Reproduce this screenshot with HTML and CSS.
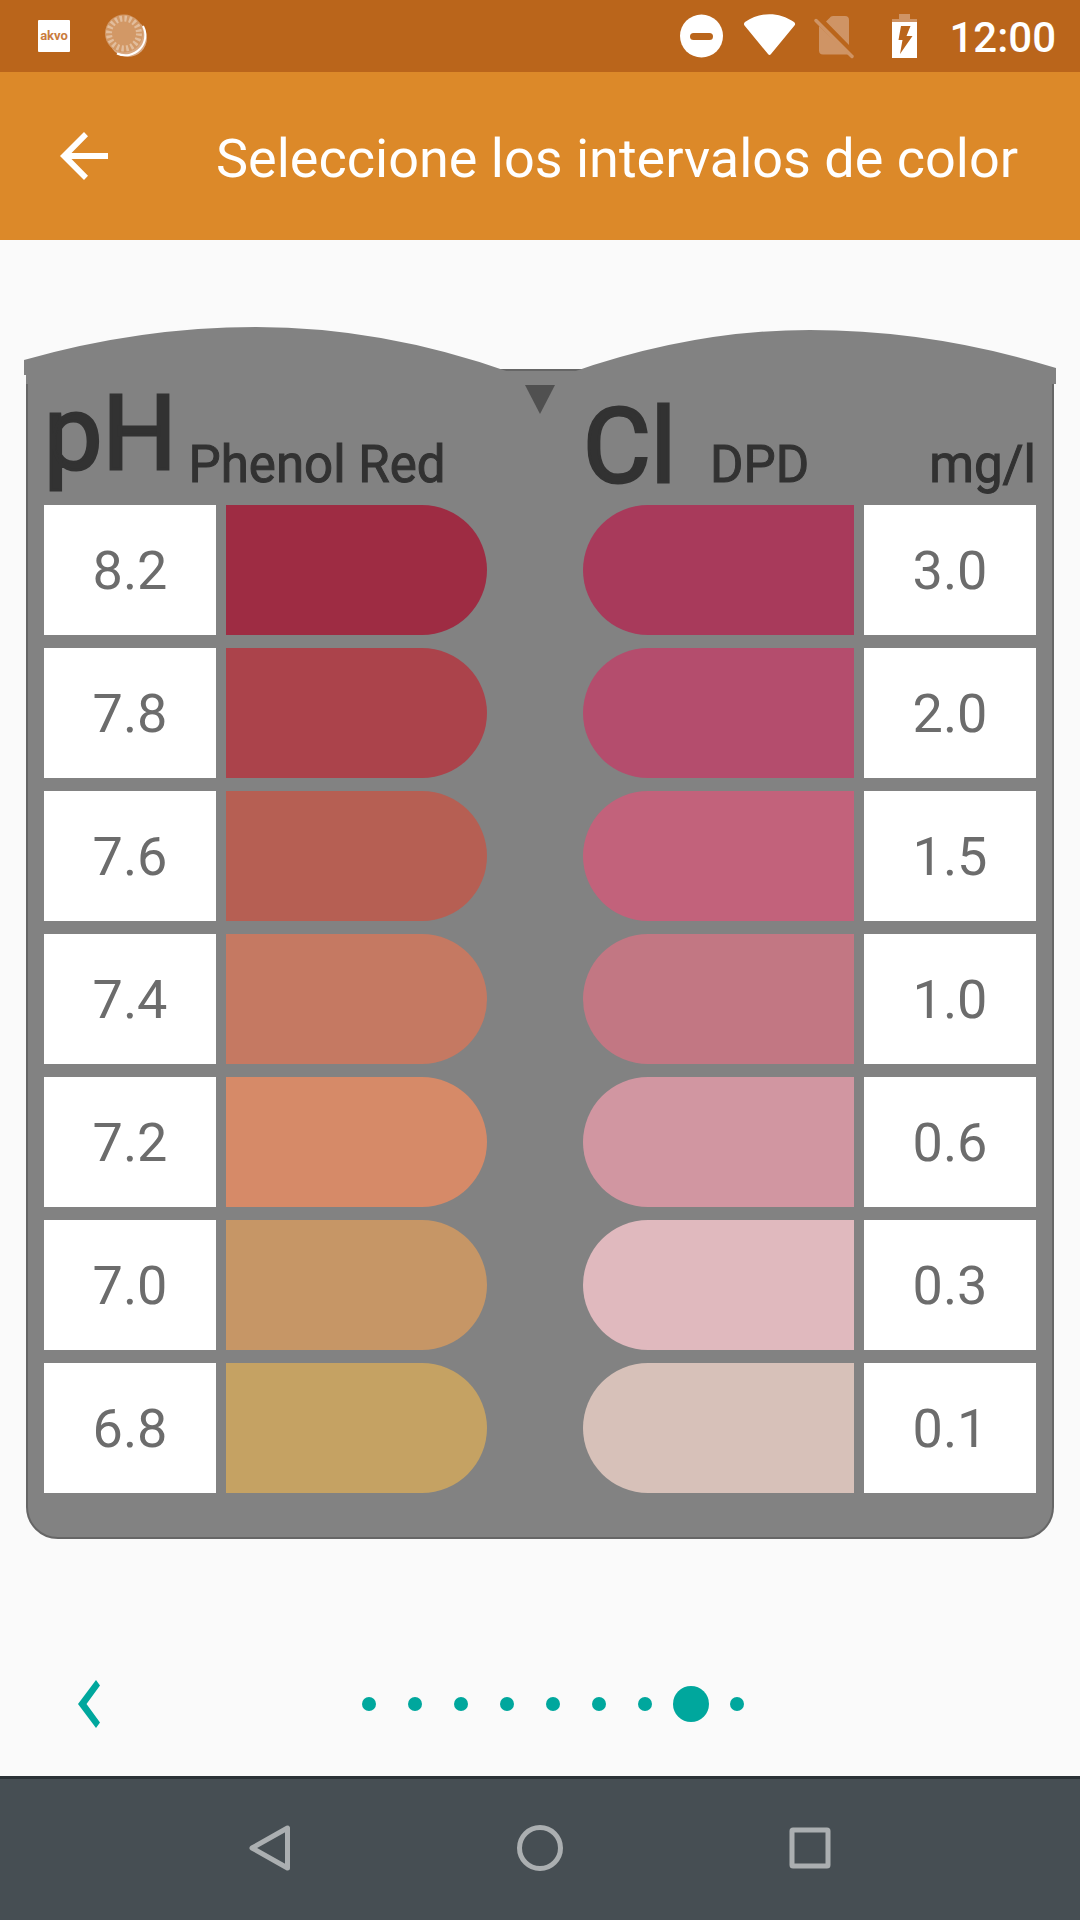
FILE: index.html
```html
<!DOCTYPE html>
<html lang="es">
<head>
<meta charset="utf-8">
<meta name="viewport" content="width=device-width, initial-scale=1">
<title>Seleccione los intervalos de color</title>
<link rel="stylesheet" href="styles.css">
</head>
<body>
<div class="status-bar">
  <span class="app-badge">akvo</span>
  <svg class="status-icon" width="44" height="44" viewBox="0 0 44 44" aria-hidden="true">
    <circle cx="23" cy="24" r="19" fill="#d9a983"/>
    <path d="M38 12a20 20 0 0 1-26 27.500a20 20 0 0 0 26-27.500z" fill="#fff" stroke="#fff" stroke-width="2"/>
    <circle cx="19" cy="19.500" r="19" fill="#d29866"/>
    <circle cx="19" cy="19.500" r="15" fill="none" stroke="#e2bd9c" stroke-width="6" stroke-dasharray="2.400 2.312"/>
  </svg>
  <div class="status-right">
    <svg width="44" height="44" viewBox="0 0 44 44" aria-hidden="true">
      <circle cx="21.500" cy="22" r="21.500" fill="#fff"/>
      <rect x="10" y="19" width="23" height="7" rx="3.500" fill="#ba651b"/>
    </svg>
    <svg width="52" height="44" viewBox="0 0 52 44" aria-hidden="true">
      <path d="M1 8C16-2.500 35-2.500 50 8Q52 9.500 50.500 11.500L27 40Q25.500 42 24 40L.500 11.500Q-.800 9.500 1 8z" fill="#fff"/>
    </svg>
    <svg class="sim" width="56" height="44" viewBox="0 0 56 44" aria-hidden="true">
      <path d="M10 7.500L15 2.500Q16 2 17 2H29Q33 2 33 6V31zM3 12L33 40.500H7Q3 40.500 3 36.500z" fill="#cf9465"/>
      <path d="M0 6.500L36 42.500" stroke="#cf9465" stroke-width="3.500" stroke-linecap="round"/>
    </svg>
    <svg width="26" height="44" viewBox="0 0 26 44" aria-hidden="true">
      <path d="M7 0H18V5H25V8H0V5H7z" fill="#cf9465"/>
      <path d="M0 8H25V44H0z" fill="#fff"/>
      <path d="M9 12H18.500L14.500 22H20.500L8 40L10.500 26H6.500z" fill="#ba651b"/>
    </svg>
    <span class="clock">12:00</span>
  </div>
</div>
<header class="app-bar">
  <button class="back" type="button" aria-label="Atrás">
    <svg width="48" height="48" viewBox="0 0 48 48" aria-hidden="true"><path d="M48 21H11.500L28 4.200L24 0L0 24L24 48L28 43.800L11.500 27H48z" fill="#fff"/></svg>
  </button>
  <h1 class="title">Seleccione los intervalos de color</h1>
</header>
<main class="content">
  <section class="chart">
    <svg class="chart-top" viewBox="0 0 1032 57" preserveAspectRatio="none" aria-hidden="true">
      <path d="M0 33Q116 0 232 0Q360 0 488 46V57H2V48H0zM546 46Q668 3 786 3Q909 3 1032 41V57H546z" fill="#828282"/>
    </svg>
    <svg class="chart-mark" width="30" height="29" viewBox="0 0 30 29" aria-hidden="true"><path d="M0 0H30L15 29z" fill="#505050"/></svg>
    <div class="scale">
      <h2 class="scale-head"><span class="formula formula-raised">pH</span><span class="reagent">Phenol Red</span></h2>
      <table class="levels" aria-label="pH">
        <tbody>
        <tr><th scope="row">8.2</th><td class="ph-82"></td></tr>
        <tr><th scope="row">7.8</th><td class="ph-78"></td></tr>
        <tr><th scope="row">7.6</th><td class="ph-76"></td></tr>
        <tr><th scope="row">7.4</th><td class="ph-74"></td></tr>
        <tr><th scope="row">7.2</th><td class="ph-72"></td></tr>
        <tr><th scope="row">7.0</th><td class="ph-70"></td></tr>
        <tr><th scope="row">6.8</th><td class="ph-68"></td></tr>
        </tbody>
      </table>
    </div>
    <div class="scale scale-right">
      <h2 class="scale-head"><span class="formula">Cl</span><span class="reagent">DPD</span><span class="unit">mg/l</span></h2>
      <table class="levels" aria-label="Cl">
        <tbody>
        <tr><td class="cl-30"></td><th scope="row">3.0</th></tr>
        <tr><td class="cl-20"></td><th scope="row">2.0</th></tr>
        <tr><td class="cl-15"></td><th scope="row">1.5</th></tr>
        <tr><td class="cl-10"></td><th scope="row">1.0</th></tr>
        <tr><td class="cl-06"></td><th scope="row">0.6</th></tr>
        <tr><td class="cl-03"></td><th scope="row">0.3</th></tr>
        <tr><td class="cl-01"></td><th scope="row">0.1</th></tr>
        </tbody>
      </table>
    </div>
  </section>
  <div class="pager">
    <button class="prev" type="button" aria-label="Anterior">
      <svg width="22" height="48" viewBox="0 0 22 48" aria-hidden="true"><path d="M18 0L22 5.500L8.500 24L22 42.500L18 48L0 24z" fill="#00a79d"/></svg>
    </button>
    <div class="dots">
      <span class="dot"></span><span class="dot"></span><span class="dot"></span><span class="dot"></span><span class="dot"></span><span class="dot"></span><span class="dot"></span><span class="dot current"></span><span class="dot"></span>
    </div>
  </div>
</main>
<nav class="nav-bar">
  <button type="button" aria-label="Atrás"><svg width="46" height="46" viewBox="0 0 46 46" aria-hidden="true"><path d="M40.500 3V43L5 23z" fill="none" stroke="#abafb1" stroke-width="5" stroke-linejoin="round"/></svg></button>
  <button type="button" aria-label="Inicio"><svg width="46" height="46" viewBox="0 0 46 46" aria-hidden="true"><circle cx="23" cy="23" r="20.500" fill="none" stroke="#abafb1" stroke-width="5"/></svg></button>
  <button type="button" aria-label="Recientes"><svg width="46" height="46" viewBox="0 0 46 46" aria-hidden="true"><rect x="5" y="5" width="36" height="36" rx="1" fill="none" stroke="#abafb1" stroke-width="5"/></svg></button>
</nav>
</body>
</html>
```
FILE: styles.css
```css
* {
  box-sizing: border-box;
}

body {
  margin: 0;
  min-height: 100vh;
  display: flex;
  flex-direction: column;
  background: #fafafa;
  font-family: Roboto, sans-serif;
}

button {
  padding: 0;
  border: 0;
  background: none;
  display: flex;
  align-items: center;
  justify-content: center;
}

svg {
  display: block;
  overflow: visible;
}

/* Status bar */
.status-bar {
  height: 72px;
  padding: 0 24px 0 38px;
  display: flex;
  align-items: center;
  background: #ba651b;
  color: #fff;
}

.app-badge {
  width: 32px;
  height: 32px;
  margin-right: 35px;
  border-radius: 1px;
  background: #fff;
  color: #c97c3d;
  font: bold 13px/32px Roboto, sans-serif;
  text-align: center;
}

.status-right {
  margin-left: auto;
  display: flex;
  align-items: center;
  gap: 20px;
}

.clock {
  margin-left: 11px;
  padding-top: 4px;
  font-size: 42px;
  font-weight: 500;
  line-height: 68px;
}

/* App bar */
.app-bar {
  height: 168px;
  display: flex;
  align-items: center;
  background: #dc8929;
  color: #fff;
}

.back {
  width: 168px;
  height: 168px;
}

.title {
  margin: 0 0 0 48px;
  padding-top: 6px;
  font-size: 54px;
  font-weight: 400;
  line-height: 64px;
  white-space: nowrap;
}

/* Colour chart */
.content {
  flex: 1;
  display: flex;
  flex-direction: column;
  padding-top: 129px;
}

.chart {
  position: relative;
  margin: 0 26px;
  padding: 0 16px 44px;
  border: 2px solid #666;
  border-radius: 0 0 32px 32px;
  background: #828282;
  display: grid;
  grid-template-columns: 443fr 453fr;
  gap: 96px;
}

.chart-top {
  position: absolute;
  top: -44px;
  left: -4px;
  width: calc(100% + 8px);
  height: 57px;
}

.chart-mark {
  position: absolute;
  top: 14px;
  left: calc(50% - 15px);
}

.scale {
  position: relative;
}

.scale-head {
  height: 134px;
  margin: 0;
  padding-bottom: 4px;
  display: flex;
  align-items: flex-end;
  gap: 12px;
  color: #323232;
  font-size: 51px;
  font-weight: 400;
  line-height: 72px;
  -webkit-text-stroke: 1px #323232;
}

.scale-right .scale-head {
  gap: 34px;
}

.formula {
  font-size: 104px;
  line-height: 108px;
  -webkit-text-stroke: 3px #323232;
}

.formula-raised {
  padding-bottom: 13px;
}

.unit {
  margin-left: auto;
}

.levels,
.levels tbody {
  display: flex;
  flex-direction: column;
  gap: 13px;
}

.levels tr {
  height: 130px;
  display: flex;
  gap: 10px;
}

.levels th {
  width: 172px;
  padding: 2px 0 0;
  background: #fff;
  color: #6c6c6c;
  font-size: 54px;
  font-weight: 400;
  line-height: 128px;
  text-align: center;
}

.levels td {
  flex: 1;
  padding: 0;
  border-radius: 0 65px 65px 0;
}

.scale-right td {
  border-radius: 65px 0 0 65px;
}

.ph-82 { background: #9e2c43; }
.ph-78 { background: #ab434b; }
.ph-76 { background: #b65f53; }
.ph-74 { background: #c57962; }
.ph-72 { background: #d68a68; }
.ph-70 { background: #c69666; }
.ph-68 { background: #c5a263; }
.cl-30 { background: #a83a5b; }
.cl-20 { background: #b44d6d; }
.cl-15 { background: #c2627b; }
.cl-10 { background: #c27783; }
.cl-06 { background: #d196a1; }
.cl-03 { background: #e0b9be; }
.cl-01 { background: #d7c1b9; }

/* Pager */
.pager {
  height: 144px;
  margin-top: auto;
  display: grid;
  grid-template-columns: 178px 1fr 153px;
  align-items: center;
}

.prev {
  width: 178px;
  height: 144px;
}

.dots {
  display: flex;
  justify-content: center;
}

.dot {
  width: 46px;
  height: 36px;
  display: flex;
  align-items: center;
  justify-content: center;
}

.dot::before {
  content: "";
  width: 14px;
  height: 14px;
  border-radius: 50%;
  background: #00a79d;
}

.current::before {
  width: 36px;
  height: 36px;
}

/* System navigation */
.nav-bar {
  height: 144px;
  padding: 0 135px 3px;
  border-top: 3px solid #2b3236;
  display: flex;
  background: #464e53;
}

.nav-bar button {
  flex: 1;
}
```
